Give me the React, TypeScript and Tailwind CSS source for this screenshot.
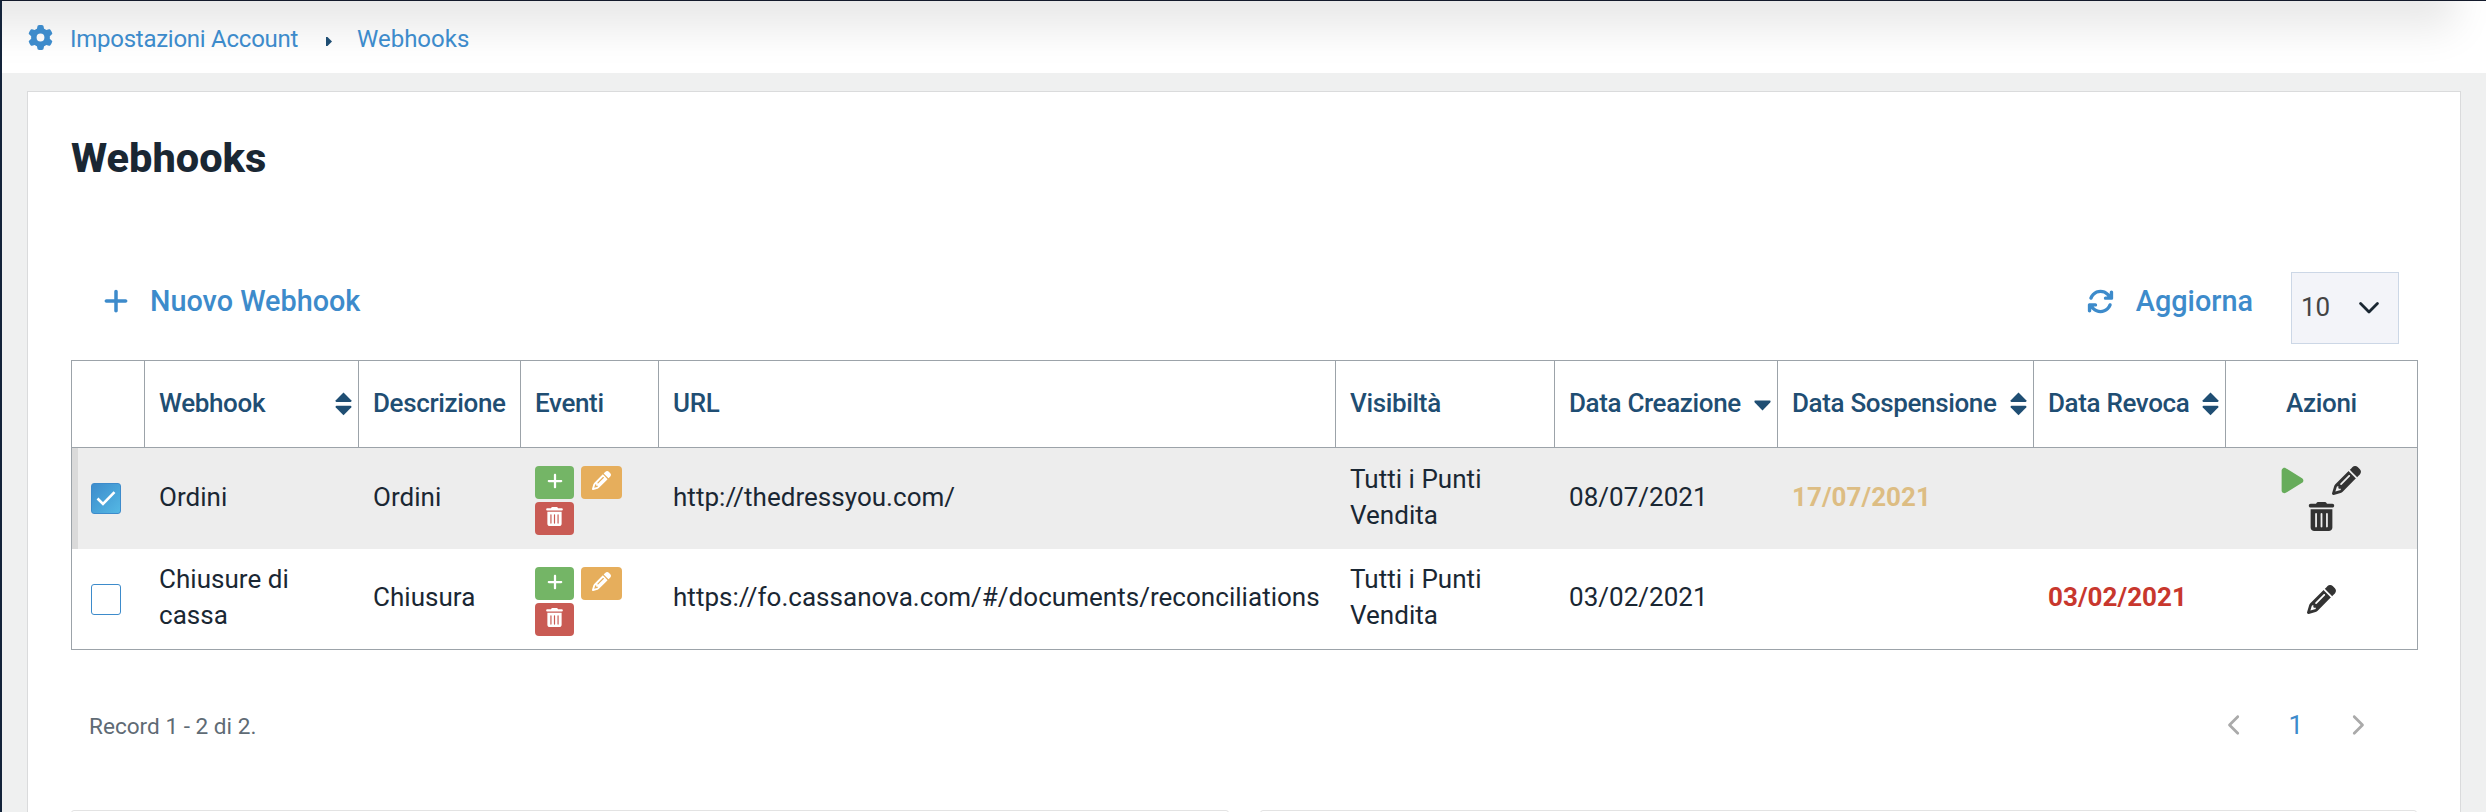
import type { ReactNode } from 'react'
import clsx from 'clsx'
import {
  FaArrowsRotate,
  FaChevronLeft,
  FaChevronRight,
  FaGear,
  FaPencil,
  FaPlay,
  FaPlus,
  FaTrashCan,
} from 'react-icons/fa6'

type Webhook = {
  name: string
  description: string
  url: string
  visibility: string
  createdAt: string
  suspendedAt?: string
  revokedAt?: string
  selected: boolean
}

const webhooks: Webhook[] = [
  {
    name: 'Ordini',
    description: 'Ordini',
    url: 'http://thedressyou.com/',
    visibility: 'Tutti i Punti Vendita',
    createdAt: '08/07/2021',
    suspendedAt: '17/07/2021',
    selected: true,
  },
  {
    name: 'Chiusure di cassa',
    description: 'Chiusura',
    url: 'https://fo.cassanova.com/#/documents/reconciliations',
    visibility: 'Tutti i Punti Vendita',
    createdAt: '03/02/2021',
    revokedAt: '03/02/2021',
    selected: false,
  },
]

function SortIcon({ desc = false }: { desc?: boolean }) {
  return (
    <svg width="17" height="24" viewBox="0 0 17 24" fill="currentColor" className="mt-[3px] shrink-0">
      {!desc && <path d="M8.5 0.4 16.2 8.2Q17 9.9 15.6 9.9H1.4Q0 9.9 0.8 8.2Z" />}
      {desc ? (
        <path d="M1.2 8.6H15.8Q17.2 8.8 16.2 10.4L8.5 18.4 0.8 10.4Q-0.2 8.8 1.2 8.6Z" />
      ) : (
        <path d="M1.4 13.7H15.6Q17 13.7 16.2 15.4L8.5 23.3 0.8 15.4Q0 13.7 1.4 13.7Z" />
      )}
    </svg>
  )
}

function HeaderCell({ children, sort, className }: { children?: ReactNode; sort?: 'both' | 'desc'; className?: string }) {
  return (
    <th className={clsx('border-b border-r border-[#9ca3a9] p-0 pb-[3px] pl-3.5 text-left font-medium text-[#1f4e73] last:border-r-0', className)}>
      <div className="flex items-center justify-between whitespace-nowrap pr-1.5 tracking-[-0.35px]">
        <span>{children}</span>
        {sort && <SortIcon desc={sort === 'desc'} />}
      </div>
    </th>
  )
}

function Checkbox({ checked }: { checked: boolean }) {
  return (
    <span
      role="checkbox"
      aria-checked={checked}
      className={clsx(
        'flex h-[31px] w-[30px] items-center justify-center rounded-[3px] border border-[#3d8bcb]',
        checked ? 'bg-linear-to-br from-[#3d8ccc] to-[#54b8e4]' : 'bg-white',
      )}
    >
      {checked && (
        <svg width="20" height="15" viewBox="0 0 20 15" fill="none" stroke="white" strokeWidth="2.6">
          <path d="M1.5 7.5 7 13 18.5 1.2" />
        </svg>
      )}
    </span>
  )
}

function EventBadges() {
  return (
    <div className="flex flex-wrap gap-x-[7px] gap-y-[3px] text-[19px] text-white">
      <span className="flex h-[33px] w-[39px] justify-center rounded-[4px] bg-[#74b566] pt-[6px]">
        <FaPlus size={18} />
      </span>
      <span className="flex h-[33px] w-[41px] justify-center rounded-[4px] bg-[#e6ae5c] pt-[5px]">
        <FaPencil />
      </span>
      <span className="flex h-[33px] w-[39px] justify-center rounded-[4px] bg-[#c95b54] pt-[5px]">
        <FaTrashCan />
      </span>
    </div>
  )
}

function RowActions({ webhook }: { webhook: Webhook }) {
  if (webhook.revokedAt) {
    return (
      <div className="flex justify-center text-[29px] text-[#333]">
        <FaPencil />
      </div>
    )
  }
  return (
    <div className="flex flex-col items-center gap-[7px] text-[29px] text-[#333]">
      <div className="flex gap-[25px]">
        <FaPlay className="-ml-1 text-[#67ac5b]" />
        <FaPencil />
      </div>
      <FaTrashCan />
    </div>
  )
}

function WebhookRow({ webhook }: { webhook: Webhook }) {
  return (
    <tr className={webhook.selected ? 'h-[101px] bg-[#ededed]' : 'h-[100px]'}>
      <td className={clsx('p-0 pl-[19px]', webhook.selected && 'shadow-[inset_6px_0_0_#dadada]')}>
        <Checkbox checked={webhook.selected} />
      </td>
      <td className="p-0 pr-10 pb-1 pl-3.5">{webhook.name}</td>
      <td className="p-0 pb-1 pl-3.5">{webhook.description}</td>
      <td className="p-0 pt-1 pl-3.5">
        <EventBadges />
      </td>
      <td className="p-0 pb-1 pl-3.5">{webhook.url}</td>
      <td className="p-0 pr-10 pb-1 pl-3.5">{webhook.visibility}</td>
      <td className="p-0 pb-1 pl-3.5">{webhook.createdAt}</td>
      <td className="p-0 pb-1 pl-3.5 font-bold text-[#ddbd83]">{webhook.suspendedAt}</td>
      <td className="p-0 pb-1 pl-3.5 font-bold text-[#c8372d]">{webhook.revokedAt}</td>
      <td className="p-0">
        <RowActions webhook={webhook} />
      </td>
    </tr>
  )
}

function Breadcrumb() {
  return (
    <header className="relative flex h-[72px] shrink-0 items-center overflow-hidden bg-white pl-[26px] text-[24px] text-[#3d8bcb]">
      <div className="absolute -top-[200px] right-[30px] -left-[100px] h-[200px] shadow-[0_28px_38px_rgba(0,0,0,0.09)]" />
      <div className="relative flex items-center">
        <FaGear size={25} />
        <a className="mt-[3px] ml-[17px] w-[229px] whitespace-nowrap tracking-[-0.26px]">Impostazioni Account</a>
        <svg width="6" height="9" viewBox="0 0 6 9" fill="#1f4e73" className="mt-2 ml-[27px]">
          <path d="M0 0H1.5L6 4.5 1.5 9H0Z" />
        </svg>
        <a className="mt-[3px] ml-[25px]">Webhooks</a>
      </div>
    </header>
  )
}

function Toolbar() {
  return (
    <div className="flex h-[72px] items-start pr-[18px] pl-[31px] text-[28.8px] font-medium text-[#3d8bcb]">
      <button className="mt-[11px] flex items-center gap-[20px]">
        <FaPlus size={28} />
        <span className="leading-9">Nuovo Webhook</span>
      </button>
      <button className="mt-[11px] mr-[38px] ml-auto flex items-center gap-[22px]">
        <FaArrowsRotate size={27} />
        <span className="leading-9">Aggiorna</span>
      </button>
      <div className="flex h-[72px] w-[108px] items-center justify-between border border-[#ccd7e6] bg-[#f3f4f9] pr-[19px] pl-[9px] text-[26px] font-normal text-[#444]">
        <span className="pb-0.5">10</span>
        <svg width="20" height="12" viewBox="0 0 20 12" fill="none" stroke="#1a2733" strokeWidth="2.8" strokeLinecap="round" strokeLinejoin="round">
          <path d="M1.6 1.6 10 10 18.4 1.6" />
        </svg>
      </div>
    </div>
  )
}

function WebhooksTable() {
  return (
    <table className="mt-4 w-[2347px] table-fixed border-separate border-spacing-0 border border-[#9ca3a9] text-[26px] leading-9 tracking-[0.03px] text-[#1a2733]">
      <colgroup>
        <col className="w-[73px]" />
        <col className="w-[214px]" />
        <col className="w-[162px]" />
        <col className="w-[138px]" />
        <col className="w-[677px]" />
        <col className="w-[219px]" />
        <col className="w-[223px]" />
        <col className="w-[256px]" />
        <col className="w-[192px]" />
        <col className="w-[191px]" />
      </colgroup>
      <thead>
        <tr className="h-[87px]">
          <HeaderCell />
          <HeaderCell sort="both">Webhook</HeaderCell>
          <HeaderCell>Descrizione</HeaderCell>
          <HeaderCell>Eventi</HeaderCell>
          <HeaderCell>URL</HeaderCell>
          <HeaderCell>Visibiltà</HeaderCell>
          <HeaderCell sort="desc">Data Creazione</HeaderCell>
          <HeaderCell sort="both">Data Sospensione</HeaderCell>
          <HeaderCell sort="both">Data Revoca</HeaderCell>
          <HeaderCell className="pl-[60px]">Azioni</HeaderCell>
        </tr>
      </thead>
      <tbody>
        {webhooks.map((webhook) => (
          <WebhookRow key={webhook.url} webhook={webhook} />
        ))}
      </tbody>
    </table>
  )
}

function Pagination() {
  return (
    <div className="mt-[57px] flex h-[36px] items-center justify-between pr-[49px] pl-[18px]">
      <span className="pt-1 text-[22.6px] text-[#5f6b75]">Record 1 - 2 di 2.</span>
      <div className="flex items-center text-[26px] text-[#3d8bcb]">
        <FaChevronLeft size={22} className="text-[#aaa]" />
        <span className="mr-[43px] ml-[42px]">1</span>
        <FaChevronRight size={22} className="text-[#aaa]" />
      </div>
    </div>
  )
}

function App() {
  return (
    <div className="flex h-[812px] flex-col overflow-hidden border-t border-l-2 border-t-[#131a2b] border-l-[#13233a] bg-[#eff0f0] font-[Roboto,sans-serif]">
      <Breadcrumb />
      <main className="mt-[18px] mr-[25px] ml-[25px] min-h-0 flex-1 border border-b-0 border-[#dadbdc] bg-white px-[43px]">
        <h1 className="mt-[38px] text-[41.5px] leading-[56px] font-extrabold text-[#1a2733]">Webhooks</h1>
        <div className="mt-[86px]">
          <Toolbar />
        </div>
        <WebhooksTable />
        <Pagination />
        <div className="mt-[67px] flex gap-[31px]">
          <div className="h-20 flex-1 rounded-[3px] border border-[#e3e3e3]" />
          <div className="h-20 flex-1 rounded-[3px] border border-[#e3e3e3]" />
        </div>
      </main>
    </div>
  )
}

export default App
